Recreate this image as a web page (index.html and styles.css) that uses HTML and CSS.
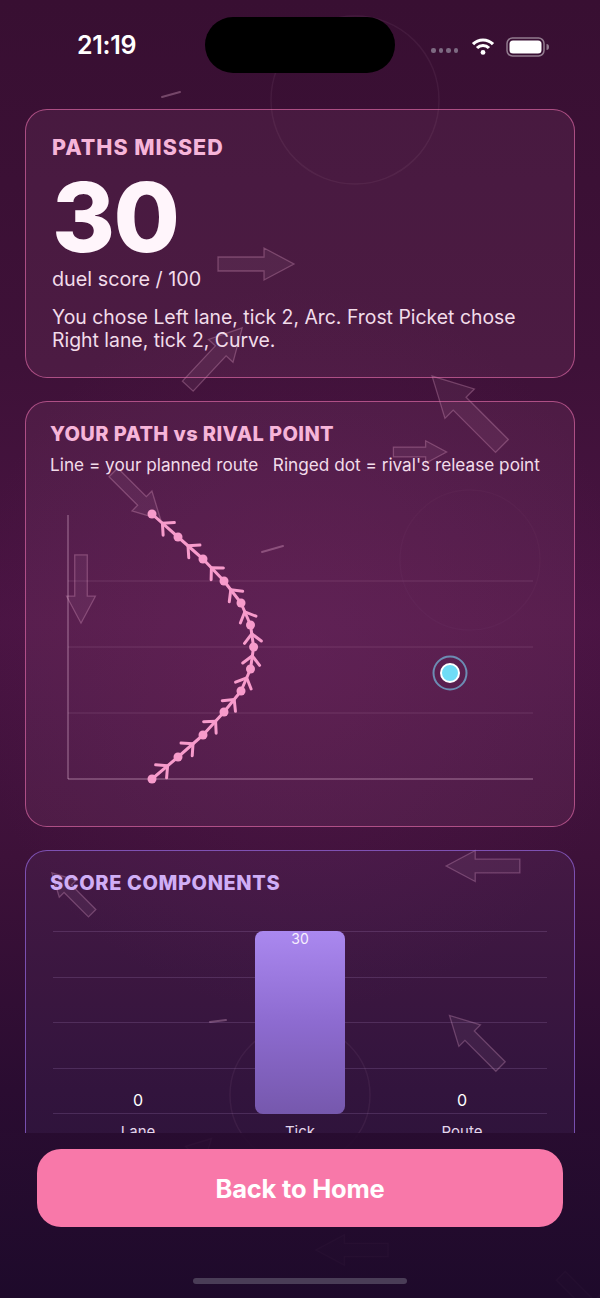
FILE: index.html
```html
<!DOCTYPE html>
<html lang="en">
<head>
    <meta charset="UTF-8">
    <meta name="viewport" content="width=device-width, initial-scale=1.0">
    <title>Duel Result</title>
    <link rel="stylesheet" href="styles.css">
</head>
<body>
    <div class="screen">
        <svg class="backdrop" viewBox="0 0 600 1298" aria-hidden="true">
            <defs>
                <path id="drift-arrow" d="M-38,-7 H8 V-16 L38,0 L8,16 V7 H-38 Z" vector-effect="non-scaling-stroke"/>
            </defs>
            <circle class="ring" cx="355" cy="100" r="84"/>
            <circle class="ring" cx="300" cy="1095" r="70"/>
            <circle class="ring faint" cx="470" cy="560" r="70"/>
            <line class="spark" x1="162" y1="97" x2="180" y2="92"/>
            <line class="spark" x1="262" y1="552" x2="283" y2="546"/>
            <line class="spark" x1="210" y1="1022" x2="226" y2="1020"/>
            <line class="spark" x1="320" y1="1060" x2="336" y2="1055"/>
            <use href="#drift-arrow" transform="translate(256 264)"/>
            <use href="#drift-arrow" transform="translate(215 357) rotate(-47) scale(1.05)"/>
            <use href="#drift-arrow" transform="translate(467 411) rotate(-135) scale(1.3)"/>
            <use href="#drift-arrow" transform="translate(420 452) scale(0.7)"/>
            <use href="#drift-arrow" transform="translate(137 496) rotate(45) scale(0.88)"/>
            <use href="#drift-arrow" transform="translate(81 589) rotate(90) scale(0.9)"/>
            <use href="#drift-arrow" transform="translate(483 866) rotate(180) scale(0.97)"/>
            <use href="#drift-arrow" transform="translate(72 893) rotate(-135) scale(0.75)"/>
            <use href="#drift-arrow" transform="translate(475 1041) rotate(-135) scale(0.95)"/>
            <use href="#drift-arrow" transform="translate(352 1250) rotate(180) scale(0.95)"/>
            <use href="#drift-arrow" transform="translate(585 1300) rotate(45) scale(0.9)"/>
            <use href="#drift-arrow" transform="translate(190 1160) rotate(-45) scale(0.8)"/>
        </svg>

        <header class="status-bar">
            <span class="clock">21:19</span>
            <div class="island"></div>
            <div class="status-icons">
                <span class="signal"><i></i><i></i><i></i><i></i></span>
                <svg class="wifi" viewBox="0 0 26 19">
                    <path d="M3 7.2 A14 14 0 0 1 23 7.2" />
                    <path d="M7 11 A8.4 8.4 0 0 1 19 11" />
                    <circle cx="13" cy="15.4" r="2.4" />
                </svg>
                <svg class="battery" viewBox="0 0 44 20">
                    <rect class="battery-shell" x="1" y="1" width="37" height="18" rx="5.5"/>
                    <rect class="battery-level" x="3.5" y="3.5" width="32" height="13" rx="3.5"/>
                    <path class="battery-tip" d="M40.5 7 a2.5 3 0 0 1 0 6 z"/>
                </svg>
            </div>
        </header>

        <main class="results">
            <section class="card card-score">
                <h2 class="card-title">PATHS MISSED</h2>
                <div class="score">30</div>
                <p class="score-sub">duel score / 100</p>
                <p class="summary">You chose Left lane, tick 2, Arc. Frost Picket chose Right lane, tick 2, Curve.</p>
            </section>

            <section class="card card-path">
                <h2 class="card-title">YOUR PATH vs RIVAL POINT</h2>
                <p class="legend">Line = your planned route&nbsp;&nbsp; Ringed dot = rival's release point</p>
                <svg id="pathChart" class="path-chart" viewBox="25 487 550 320">
                    <line class="grid" x1="67" y1="581" x2="532" y2="581"/>
                    <line class="grid" x1="67" y1="647" x2="532" y2="647"/>
                    <line class="grid" x1="67" y1="713" x2="532" y2="713"/>
                    <line class="axis" x1="67" y1="515" x2="67" y2="779"/>
                    <line class="axis" x1="67" y1="779" x2="532" y2="779"/>
                </svg>
            </section>

            <section class="card card-components">
                <h2 class="card-title">SCORE COMPONENTS</h2>
                <div class="bar-chart">
                    <div class="grid-lines">
                        <span></span><span></span><span></span><span></span>
                    </div>
                    <div class="bars">
                        <div class="bar-col"><span class="bar-value">0</span></div>
                        <div class="bar-col">
                            <div class="bar" style="height: 100%;"><span class="bar-value inside">30</span></div>
                        </div>
                        <div class="bar-col"><span class="bar-value">0</span></div>
                    </div>
                </div>
                <div class="bar-labels">
                    <span>Lane</span><span>Tick</span><span>Route</span>
                </div>
            </section>
        </main>

        <footer class="action-bar">
            <button class="home-btn" type="button">Back to Home</button>
            <div class="home-indicator"></div>
        </footer>
    </div>
    <script src="chart.js"></script>
</body>
</html>
```

FILE: styles.css
```css
* {
    box-sizing: border-box;
}

body {
    margin: 0;
    background: #1e0a2b;
    font-family: Inter, "Noto Sans", sans-serif;
    color: #f3e2ee;
}

.screen {
    position: relative;
    width: 600px;
    height: 1298px;
    overflow: hidden;
    display: flex;
    flex-direction: column;
    background:
        radial-gradient(ellipse 70% 35% at 50% 50%, rgba(110, 32, 96, 0.28), transparent 80%),
        linear-gradient(180deg, #380f32 0%, #3e1138 28%, #4a1443 48%, #3d1139 66%, #2a0c31 84%, #1e0a2b 100%);
}

.backdrop {
    position: absolute;
    inset: 0;
    width: 600px;
    height: 1298px;
    z-index: 0;
}

.backdrop use {
    fill: rgba(255, 215, 238, 0.06);
    stroke: rgba(255, 190, 226, 0.26);
    stroke-width: 1.3;
}

.backdrop .ring {
    fill: none;
    stroke: rgba(255, 200, 235, 0.06);
    stroke-width: 1.5;
}

.backdrop .ring.faint {
    stroke: rgba(255, 200, 235, 0.025);
}

.backdrop .spark {
    stroke: rgba(255, 200, 230, 0.3);
    stroke-width: 2;
    stroke-linecap: round;
}

/* status bar */
.status-bar {
    position: relative;
    z-index: 1;
    display: grid;
    grid-template-columns: 205px 190px 1fr;
    align-items: center;
    padding-top: 17px;
    height: 73px;
}

.clock {
    padding-left: 77px;
    font-size: 25px;
    font-weight: 600;
    color: #fff;
    letter-spacing: -0.3px;
}

.island {
    height: 56px;
    background: #000;
    border-radius: 28px;
}

.status-icons {
    display: flex;
    align-items: center;
    padding-left: 36px;
    padding-top: 3px;
}

.signal {
    display: flex;
    gap: 3px;
    margin-top: 8px;
}

.signal i {
    width: 4.5px;
    height: 4.5px;
    border-radius: 50%;
    background: #7d6a82;
}

.wifi {
    width: 26px;
    height: 19px;
    margin-left: 12px;
}

.wifi path {
    fill: none;
    stroke: #fff;
    stroke-width: 3.2;
}

.wifi circle {
    fill: #fff;
}

.battery {
    width: 44px;
    height: 20px;
    margin-left: 10px;
}

.battery-shell {
    fill: none;
    stroke: rgba(255, 255, 255, 0.45);
    stroke-width: 1.5;
}

.battery-level {
    fill: #fff;
}

.battery-tip {
    fill: rgba(255, 255, 255, 0.45);
}

/* cards */
.results {
    position: relative;
    z-index: 1;
    flex: 1;
    min-height: 0;
    overflow: hidden;
    display: flex;
    flex-direction: column;
    gap: 23px;
    padding: 36px 25px 0;
}

.card {
    flex-shrink: 0;
    border: 1.5px solid rgba(232, 112, 172, 0.62);
    border-radius: 22px;
    background: rgba(255, 160, 220, 0.075);
    padding: 20px 24px;
}

.card-title {
    margin: 0;
    font-size: 20px;
    line-height: 24px;
    font-weight: 800;
    letter-spacing: 0.4px;
    color: #f6b5d9;
}

.card-score {
    padding: 25px 26px 22px;
    height: 269px;
}

.card-score .card-title {
    font-size: 21.5px;
    letter-spacing: 1px;
}

.score {
    margin-top: 10px;
    font-size: 96px;
    line-height: 96px;
    font-weight: 800;
    letter-spacing: -1.5px;
    color: #fff5fb;
}

.score-sub {
    margin: 2px 0 0;
    font-size: 19.8px;
    line-height: 24px;
    color: #f2dcea;
}

.summary {
    margin: 15px 0 0;
    font-size: 19.4px;
    line-height: 23px;
    color: #f2dcea;
}

.card-path {
    height: 426px;
}

.legend {
    margin: 8px 0 0;
    font-size: 17.2px;
    line-height: 22px;
    color: #f2dcea;
}

.path-chart {
    display: block;
    width: 550px;
    height: 320px;
    margin: 11px -24px 0;
    overflow: visible;
}

.path-chart .grid {
    stroke: rgba(255, 210, 235, 0.13);
    stroke-width: 1;
}

.path-chart .axis {
    stroke: rgba(255, 215, 238, 0.32);
    stroke-width: 1.5;
}

.path-chart .route-line,
.path-chart .chevron {
    fill: none;
    stroke: #f79bcb;
    stroke-width: 3;
    stroke-linecap: round;
    stroke-linejoin: round;
}

.path-chart .route-dot {
    fill: #f79bcb;
}

.path-chart .rival-ring {
    fill: none;
    stroke: #6c8cb3;
    stroke-width: 2;
}

.path-chart .rival-core {
    fill: #6fdcf6;
    stroke: #fff;
    stroke-width: 2;
}

/* score components */
.card-components {
    border-color: rgba(150, 105, 225, 0.7);
    background: rgba(190, 150, 255, 0.06);
    padding: 20px 24px 40px;
}

.card-components .card-title {
    color: #d0aef6;
    letter-spacing: 0.6px;
}

.bar-chart {
    display: grid;
    height: 183px;
    margin: 36px 3px 0;
}

.grid-lines,
.bars {
    grid-area: 1 / 1;
}

.grid-lines {
    display: flex;
    flex-direction: column;
    border-bottom: 1px solid rgba(210, 175, 245, 0.16);
}

.grid-lines span {
    flex: 1;
    border-top: 1px solid rgba(210, 175, 245, 0.16);
}

.bars {
    display: flex;
    padding: 0 4px;
}

.bar-col {
    flex: 1;
    display: flex;
    flex-direction: column;
    justify-content: flex-end;
    align-items: center;
}

.bar {
    width: 90px;
    border-radius: 8px;
    background: linear-gradient(180deg, #aa88ef 0%, #8d6bd0 50%, #7658ad 100%);
    display: flex;
    justify-content: center;
}

.bar-value {
    font-size: 16px;
    line-height: 20px;
    margin-bottom: 4px;
    color: #fff;
}

.bar-value.inside {
    font-size: 14px;
    line-height: 16px;
    margin: 0;
    color: #f6eefd;
}

.bar-labels {
    display: flex;
    padding: 0 7px;
    margin-top: 8px;
}

.bar-labels span {
    flex: 1;
    text-align: center;
    font-size: 15px;
    line-height: 20px;
    color: #e4d6ec;
}

/* bottom action */
.action-bar {
    position: relative;
    z-index: 2;
    flex-shrink: 0;
    height: 165px;
    padding: 16px 37px 0;
    background: linear-gradient(180deg, rgba(40, 12, 48, 0.9), rgba(30, 10, 43, 0.92));
    display: flex;
    flex-direction: column;
    align-items: center;
}

.home-btn {
    width: 100%;
    height: 78px;
    border: none;
    border-radius: 24px;
    background: #f878a9;
    color: #fff;
    font-family: Inter, "Noto Sans", sans-serif;
    font-size: 25.5px;
    font-weight: 700;
    letter-spacing: -0.2px;
    cursor: pointer;
}

.home-indicator {
    width: 214px;
    height: 6px;
    margin-top: 51px;
    border-radius: 3px;
    background: #4a3d57;
}
```

FILE: chart.js
```javascript
// route is drawn from the release end (bottom) to the tip (top)
const route = [
    [151, 779], [177, 757], [202, 735], [223, 712], [240, 691], [249.5, 669], [252.6, 647],
    [249.5, 625], [240, 603], [223, 581], [202, 559], [177, 537], [151, 514]
];
const rival = [449, 673];

const svgNS = 'http://www.w3.org/2000/svg';
const chart = document.getElementById('pathChart');

function add(tag, attrs) {
    const node = document.createElementNS(svgNS, tag);
    for (const key in attrs) node.setAttribute(key, attrs[key]);
    chart.appendChild(node);
    return node;
}

add('polyline', { class: 'route-line', points: route.map(p => p.join(',')).join(' ') });

// open arrowheads a bit past the middle of each leg
for (let i = 0; i < route.length - 1; i++) {
    const [ax, ay] = route[i];
    const [bx, by] = route[i + 1];
    const len = Math.hypot(bx - ax, by - ay);
    const ux = (bx - ax) / len;
    const uy = (by - ay) / len;
    const tx = ax + (bx - ax) * 0.6;
    const ty = ay + (by - ay) * 0.6;
    const c = Math.SQRT1_2;
    const arm = 12;
    const l = [(-ux * c + uy * c) * arm, (-ux * c - uy * c) * arm];
    const r = [(-ux * c - uy * c) * arm, (ux * c - uy * c) * arm];
    add('path', {
        class: 'chevron',
        d: `M${tx + l[0]},${ty + l[1]} L${tx},${ty} L${tx + r[0]},${ty + r[1]}`
    });
}

route.forEach(([x, y]) => add('circle', { class: 'route-dot', cx: x, cy: y, r: 4.5 }));

add('circle', { class: 'rival-ring', cx: rival[0], cy: rival[1], r: 16.5 });
add('circle', { class: 'rival-core', cx: rival[0], cy: rival[1], r: 9 });
```
